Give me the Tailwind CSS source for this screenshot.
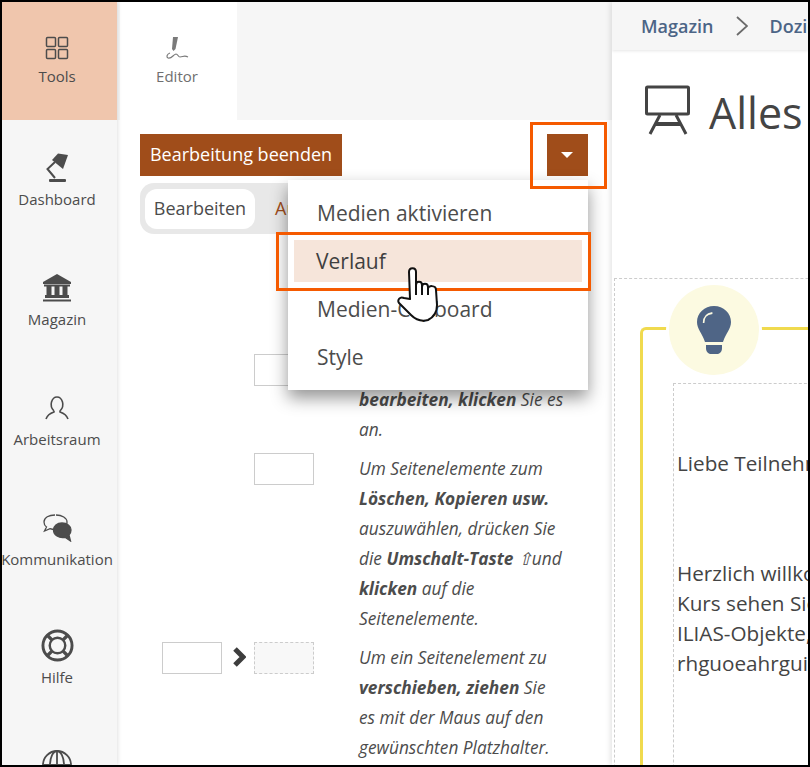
<!DOCTYPE html>
<html lang="de">
<head>
<meta charset="utf-8">
<script src="https://cdn.jsdelivr.net/npm/@tailwindcss/browser@4"></script>
</head>
<body class="bg-white">
<div class="relative flex w-[810px] h-[767px] overflow-hidden border-2 border-black bg-white font-['Open_Sans',sans-serif] text-[#4c4c4c]">

  <!-- Main bar -->
  <nav class="w-[115px] shrink-0 h-full bg-[#f6f6f6] shadow-[1px_0_4px_rgba(0,0,0,0.12)] z-10 text-[15px] leading-5 text-center">
    <div class="h-[118px] bg-[#f0c6ad] pt-[34px] pr-[5px] flex flex-col items-center">
      <svg class="w-6 h-6" viewBox="0 0 24 24" fill="none" stroke="#4c4c4c" stroke-width="1.5"><rect x="1.5" y="1.5" width="9" height="9" rx="1"/><rect x="13.5" y="1.5" width="9" height="9" rx="1"/><rect x="1.5" y="13.5" width="9" height="9" rx="1"/><rect x="13.5" y="13.5" width="9" height="9" rx="1"/></svg>
      <span class="mt-[6px]">Tools</span>
    </div>
    <div class="h-[120px] pt-[33px] pr-[5px] flex flex-col items-center">
      <svg class="w-6 h-[30px]" viewBox="0 0 24 30" fill="#4c4c4c"><path d="M7 7 L13 0.5 L23 2 L18 16 Z"/><path d="M10 9 L2.5 16 L10 25" fill="none" stroke="#4c4c4c" stroke-width="2"/><rect x="4" y="26" width="17" height="3" rx="1"/></svg>
      <span class="mt-[6px]">Dashboard</span>
    </div>
    <div class="h-[120px] pt-[34px] pr-[5px] flex flex-col items-center">
      <svg class="w-[30px] h-7" viewBox="0 0 30 28" fill="#4c4c4c"><path d="M15 0 L29 8 V10 H1 V8 Z"/><rect x="2" y="10.5" width="26" height="2"/><rect x="4.5" y="12" width="5" height="10"/><rect x="12.5" y="12" width="5" height="10"/><rect x="20.5" y="12" width="5" height="10"/><rect x="3" y="21" width="24" height="3"/><rect x="1" y="25.5" width="28" height="2"/></svg>
      <span class="mt-[7px]">Magazin</span>
    </div>
    <div class="h-[120px] pt-9 pr-[5px] flex flex-col items-center">
      <svg class="w-6 h-6" viewBox="0 0 24 24" fill="none" stroke="#4c4c4c" stroke-width="1.6"><path d="M9 15 C6.5 12.5 5.5 9.5 6.5 6 C7.5 2.5 10 1 12 1 C14 1 16.5 2.5 17.5 6 C18.5 9.5 17.5 12.5 15 15 L15 16 C18 17 21.5 18.5 23 23 M9 15 L9 16 C6 17 2.5 18.5 1 23"/></svg>
      <span class="mt-[9px]">Arbeitsraum</span>
    </div>
    <div class="h-[120px] pt-[34px] pr-[5px] flex flex-col items-center">
      <svg class="w-[30px] h-7" viewBox="0 0 30 28" fill="none" stroke="#4c4c4c" stroke-width="1.3"><path d="M13 1 C7 1 2 3.500 2 8 C2 10 3 12 4.500 13 L2.500 17 L8 14.700 C10 15.500 12 15.500 13 15.500 M14 1 C20 1 25 4 25 8 C25 9 25 10 24.500 11"/><path fill="#4c4c4c" d="M20 9 C25 9 29 12 29 16 C29 18 28 20 27 21 L28.500 27 L23 23.300 C17 24.500 11.500 21 11.500 16 C11.500 12 15 9 20 9 Z"/></svg>
      <span class="mt-[7px] whitespace-nowrap">Kommunikation</span>
    </div>
    <div class="h-[120px] pt-[29px] pr-[5px] flex flex-col items-center">
      <svg class="w-[33px] h-[33px]" viewBox="0 0 34 34" fill="none" stroke="#4c4c4c"><circle cx="17" cy="17" r="15" stroke-width="3"/><circle cx="17" cy="17" r="8" stroke-width="2.500"/><path stroke-width="3.500" d="M6 6 L11.500 11.500 M28 6 L22.500 11.500 M6 28 L11.500 22.500 M28 28 L22.500 22.500"/></svg>
      <span class="mt-[5px]">Hilfe</span>
    </div>
    <div class="pt-[30px] pr-[5px] flex flex-col items-center">
      <svg class="w-[30px] h-[30px]" viewBox="0 0 30 30" fill="none" stroke="#4c4c4c" stroke-width="1.800"><circle cx="15" cy="15" r="14"/><ellipse cx="15" cy="15" rx="7" ry="14"/><path d="M15 1 V29 M1 15 H29"/></svg>
    </div>
  </nav>

  <!-- Slate -->
  <aside class="w-[495px] shrink-0 h-full bg-white">
    <div class="flex h-[118px] bg-[#f6f6f6]">
      <div class="w-[117px] ml-[3px] pr-[3px] bg-white flex flex-col items-center pt-[34px] text-[15px] leading-5 text-[#6f6f6f]">
        <svg class="w-6 h-6" viewBox="0 0 24 24" fill="#7a7a7a"><path d="M8 1 H13 L10.500 13 L8.500 15 L7 13 Z"/><path d="M5 17 C2 18 1 21 3 22 C7 23 8 18.500 11 18 C13 18 13 21 15 21 C18 21 19 19 23 21" fill="none" stroke="#7a7a7a" stroke-width="1.200"/></svg>
        <span class="mt-[6px]">Editor</span>
      </div>
    </div>

    <div class="pl-[23px] pr-[24px]">
      <div class="mt-[14px] flex justify-between">
        <div class="h-[42px] w-[202px] bg-[#a04d1a] text-white text-[18px] leading-[41px] text-center whitespace-nowrap">Bearbeitung beenden</div>
        <div class="h-[42px] w-[41px] bg-[#a04d1a] flex items-center justify-center pr-[1px]">
          <div class="w-0 h-0 border-x-[6px] border-x-transparent border-t-[6px] border-t-white"></div>
        </div>
      </div>

      <div class="mt-[7px] h-[51px] w-[300px] bg-[#e8e8e8] rounded-[14px] flex items-center pl-[5px] text-[18px]">
        <div class="w-[110px] h-10 bg-white rounded-[12px] leading-[38px] text-center">Bearbeiten</div>
        <span class="ml-5 text-[#a04d1a]">Aussehen</span>
      </div>

      <div class="mt-[120px] flex flex-col gap-[9px] text-[17.3px] leading-[30px] italic text-[#4c4c4c]">
        <div class="flex">
          <div class="w-[219px] shrink-0 flex justify-end pr-[45px]"><div class="w-[60px] h-8 border border-[#cccccc]"></div></div>
          <p class="w-[206px] shrink-0 pt-px -mb-px">Um Seitenelemente zu <b>bearbeiten, klicken</b> Sie es an.</p>
        </div>
        <div class="flex">
          <div class="w-[219px] shrink-0 flex justify-end pr-[45px]"><div class="w-[60px] h-8 border border-[#cccccc]"></div></div>
          <p class="w-[206px] shrink-0 pt-px -mb-px">Um Seitenelemente zum <b>Löschen, Kopieren usw.</b> auszuwählen, drücken Sie die <b>Umschalt-Taste</b> ⇧und <b>klicken</b> auf die Seitenelemente.</p>
        </div>
        <div class="flex">
          <div class="w-[219px] shrink-0 flex justify-end items-start pr-[45px]">
            <div class="w-[60px] h-8 border border-[#cccccc]"></div>
            <svg class="w-[14px] h-[20px] mt-[5px] ml-[10px] mr-[8px]" viewBox="0 0 14 20" fill="none" stroke="#3d3d3d" stroke-width="5"><path d="M3 2 L11 10 L3 18"/></svg>
            <div class="w-[60px] h-8 border border-dashed border-[#cccccc] bg-[#f8f8f8]"></div>
          </div>
          <p class="w-[206px] shrink-0 pt-px -mb-px">Um ein Seitenelement zu <b>verschieben, ziehen</b> Sie es mit der Maus auf den gewünschten Platzhalter.</p>
        </div>
      </div>
    </div>
  </aside>

  <!-- Main content -->
  <main class="w-[196px] shrink-0 h-full bg-white shadow-[-2px_0_5px_rgba(0,0,0,0.1)] z-10 overflow-hidden">
    <div class="h-12 bg-[#f6f6f6] shadow-[0_1px_3px_rgba(0,0,0,0.1)] flex items-center pl-[29px] text-[18px] font-semibold text-[#4c6586] whitespace-nowrap">
      <span>Magazin</span>
      <svg class="w-3 h-5 ml-[22px] mr-[22px] shrink-0" viewBox="0 0 12 20" fill="none" stroke="#6b6b6b" stroke-width="1.800"><path d="M1 1 L11 10 L1 19"/></svg>
      <span>Dozierende</span>
    </div>
    <div class="flex items-start pt-[35px] pl-[33px] whitespace-nowrap">
      <svg class="w-[46px] h-[51px] shrink-0" viewBox="0 0 46 51" fill="none" stroke="#444444" stroke-width="3"><rect x="1.500" y="2" width="42" height="27" rx="1"/><path d="M15 30 L5 49 M31 30 L41 49"/><path d="M10 39 H36" stroke-width="4"/></svg>
      <span class="ml-[18px] text-[43px] leading-[56px] text-[#444444]">Alles zum Kurs</span>
    </div>

    <div class="mt-[137px] ml-[2px] w-[260px] h-[600px] border border-dashed border-[#cccccc] pl-[25px] pt-[48px]">
      <div class="relative w-[260px] h-[600px] border-t-[3px] border-l-[3px] border-[#f0da4e] rounded-tl-[6px] pl-[30px] pt-[53px]">
        <div class="absolute left-[26px] top-[-45px] w-[90px] h-[90px] rounded-full bg-[#fcfae1] ring-[3px] ring-white flex items-center justify-center">
          <svg class="w-[34px] h-[48px]" viewBox="0 0 34 48" fill="#4f6586"><path d="M17 0 C7.500 0 0 7 0 16 C0 23 5 27 8 36 H26 C29 27 34 23 34 16 C34 7 26.500 0 17 0 Z"/><path d="M9 39 H25 V42 C25 45.500 23 48 20 48 H14 C11 48 9 45.500 9 42 Z"/><path d="M7 17 C7 11 10 8 18 7" fill="none" stroke="#fcfae1" stroke-width="2" transform="translate(1 0) scale(0.8 1)"/></svg>
        </div>
        <div class="w-[300px] h-[500px] border border-dashed border-[#cccccc] pt-16 pl-[3px] text-[20.700px] leading-[30px] whitespace-nowrap text-[#444444]">
          <p>Liebe Teilnehmerinnen und Teilnehmer,</p>
          <p class="mt-20">Herzlich willkommen im Kurs.</p>
          <p>Kurs sehen Sie verschiedene</p>
          <p>ILIAS-Objekte, die Ihnen</p>
          <p>rhguoeahrguiaehrgui</p>
        </div>
      </div>
    </div>
  </main>

  <!-- Dropdown menu -->
  <div class="absolute left-[286px] top-[178px] z-20 w-[300px] h-[210px] bg-white shadow-[0_8px_16px_rgba(0,0,0,0.42)] pt-[12px] px-[6px] text-[21px] leading-[42px] text-[#4c4c4c]">
    <div class="h-[43px] pl-[23px]">Medien aktivieren</div>
    <div class="mt-[5px] h-[42px] bg-[#f6e5da] pl-[22px] text-[#3f3f3f]">Verlauf</div>
    <div class="mt-[6px] h-[42px] pl-[23px]">Medien-Clipboard</div>
    <div class="mt-[6px] h-[42px] pl-[23px]">Style</div>
  </div>

  <!-- Annotation frames -->
  <div class="absolute left-[528px] top-[120px] z-30 w-[77px] h-[67px] border-[3px] border-[#f55a00]"></div>
  <div class="absolute left-[274px] top-[230px] z-30 w-[315px] h-[59px] border-[3px] border-[#f55a00]"></div>

  <!-- Hand cursor -->
  <svg class="absolute left-[395px] top-[264px] z-40 w-[42px] h-[56px]" viewBox="0 0 42 56" fill="#ffffff" stroke="#111111" stroke-width="2" stroke-linejoin="round"><path d="M13 33 L12 6 C12 1 19 1 19 6 L19 19 C19 14.500 25 14.500 25 19 L25 21 C25 16.500 31 16.500 31 21 L31 23 C31 19 39 19 39 24 L40 39 C40 47 37 51 31 54 C24 56 19 54 14 49 L2 37 C0 34 3 30 7 32 Z"/><path d="M19 19 V29 M25 21 V29 M31 23 V29" fill="none"/></svg>
</div>
</body>
</html>
